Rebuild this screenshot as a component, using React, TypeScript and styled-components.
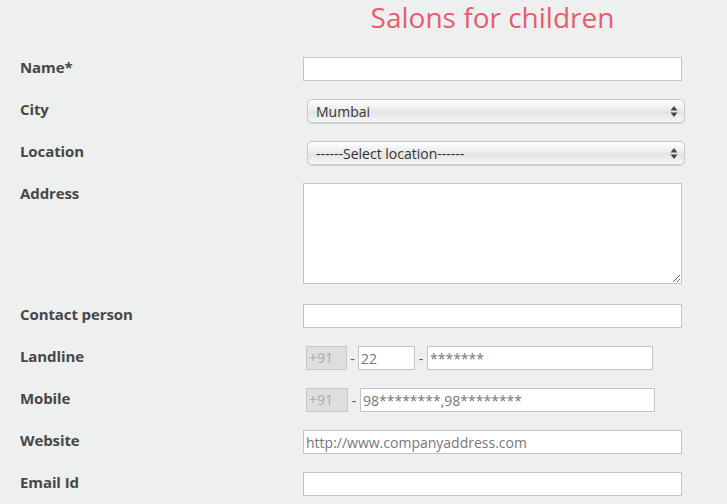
import React from "react";
import styled, { createGlobalStyle } from "styled-components";

const GlobalStyle = createGlobalStyle`
	html, body {
		margin: 0;
		padding: 0;
		background: #eef0ef;
		font-family: "Open Sans", "Liberation Sans", sans-serif;
	}
`;

const Page = styled.div`
	width: 727px;
	height: 504px;
	overflow: hidden;
	background: #eef0ef;
`;

const Title = styled.h1`
	margin: 0;
	padding: 2px 0 0 258px;
	height: 57px;
	box-sizing: border-box;
	text-align: center;
	font-size: 28px;
	font-weight: 400;
	line-height: 30px;
	color: #e45e6c;
`;

const Form = styled.div`
	display: flex;
	flex-direction: column;
	gap: 18px;
`;

const Row = styled.div<{ $gap?: number }>`
	display: grid;
	grid-template-columns: 303px 1fr;
	align-items: start;
	margin-top: ${(p) => p.$gap ?? 0}px;
`;

const Label = styled.label`
	padding-left: 20px;
	font-size: 15px;
	font-weight: 700;
	line-height: 21px;
	letter-spacing: -0.1px;
	color: #474747;
`;

const TextInput = styled.input<{ $w?: number }>`
	box-sizing: border-box;
	width: ${(p) => p.$w ?? 379}px;
	height: 24px;
	margin: 0;
	padding: 0 2px;
	border: 1px solid #c4c4c4;
	background: #fff;
	font-family: "Open Sans", "Liberation Sans", sans-serif;
	font-size: 14px;
	color: #777;
	outline: none;
`;

const TextArea = styled.textarea`
	box-sizing: border-box;
	width: 379px;
	height: 101px;
	margin: 0;
	border: 1px solid #c4c4c4;
	background: #fff;
	display: block;
	outline: none;
`;

const SelectBox = styled.div`
	box-sizing: border-box;
	margin-left: 4px;
	width: 378px;
	height: 24px;
	display: flex;
	align-items: center;
	justify-content: space-between;
	padding: 0 6px 0 8px;
	border: 1px solid #c9c9c9;
	border-radius: 5px;
	background: linear-gradient(#ffffff, #ececec 45%, #e4e4e4 55%, #f6f6f6);
	box-shadow: 0 1px 1px rgba(0, 0, 0, 0.12);
	font-size: 14px;
	color: #333;
`;

const PhoneLine = styled.div`
	display: flex;
	align-items: center;
	padding-left: 3px;
`;

const Code = styled.div<{ $w: number }>`
	box-sizing: border-box;
	width: ${(p) => p.$w}px;
	height: 24px;
	padding-left: 2px;
	border: 1px solid #c8c8c8;
	background: #dedede;
	font-size: 14px;
	line-height: 22px;
	color: #aaa;
`;

const Dash = styled.span<{ $w: number }>`
	width: ${(p) => p.$w}px;
	text-align: center;
	font-size: 14px;
	color: #555;
`;

const Arrows = () => (
	<svg width="8" height="13" viewBox="0 0 8 13">
		<path d="M4 1 L7.5 5.5 H0.5 Z" fill="#444" />
		<path d="M4 12 L7.5 7.5 H0.5 Z" fill="#444" />
	</svg>
);

const App = () => (
	<Page>
		<GlobalStyle />
		<Title>Salons for children</Title>
		<Form>
			<Row>
				<Label>Name*</Label>
				<TextInput />
			</Row>
			<Row>
				<Label>City</Label>
				<SelectBox>
					<span>Mumbai</span>
					<Arrows />
				</SelectBox>
			</Row>
			<Row>
				<Label>Location</Label>
				<SelectBox>
					<span>------Select location------</span>
					<Arrows />
				</SelectBox>
			</Row>
			<Row>
				<Label>Address</Label>
				<TextArea />
			</Row>
			<Row $gap={2}>
				<Label>Contact person</Label>
				<TextInput />
			</Row>
			<Row>
				<Label>Landline</Label>
				<PhoneLine>
					<Code $w={41}>+91</Code>
					<Dash $w={11}>-</Dash>
					<TextInput $w={57} defaultValue="22" />
					<Dash $w={12}>-</Dash>
					<TextInput $w={226} defaultValue="*******" />
				</PhoneLine>
			</Row>
			<Row>
				<Label>Mobile</Label>
				<PhoneLine>
					<Code $w={42}>+91</Code>
					<Dash $w={12}>-</Dash>
					<TextInput $w={295} defaultValue="98********,98********" />
				</PhoneLine>
			</Row>
			<Row>
				<Label>Website</Label>
				<TextInput defaultValue="http://www.companyaddress.com" />
			</Row>
			<Row>
				<Label>Email Id</Label>
				<TextInput />
			</Row>
		</Form>
	</Page>
);

export default App;
